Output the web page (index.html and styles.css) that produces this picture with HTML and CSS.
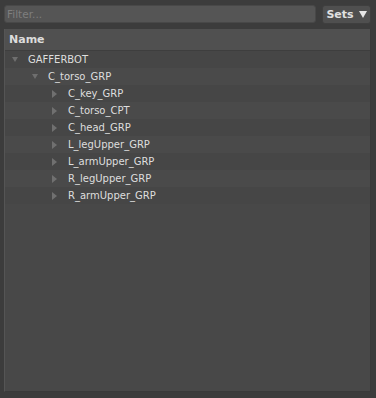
FILE: index.html
```html
<!DOCTYPE html>
<html>
<head>
<meta charset="utf-8">
<link rel="stylesheet" href="styles.css">
</head>
<body>
<div class="app">
  <div class="toolbar">
    <div class="filter">Filter...</div>
    <div class="sets">Sets <span class="caret"></span></div>
  </div>
  <div class="panel">
    <div class="header">Name</div>
    <div class="rows">
      <div class="row odd"><span class="tri down"></span><span class="label">GAFFERBOT</span></div>
      <div class="row even l1"><span class="tri down"></span><span class="label">C_torso_GRP</span></div>
      <div class="row odd l2"><span class="tri right"></span><span class="label">C_key_GRP</span></div>
      <div class="row even l2"><span class="tri right"></span><span class="label">C_torso_CPT</span></div>
      <div class="row odd l2"><span class="tri right"></span><span class="label">C_head_GRP</span></div>
      <div class="row even l2"><span class="tri right"></span><span class="label">L_legUpper_GRP</span></div>
      <div class="row odd l2"><span class="tri right"></span><span class="label">L_armUpper_GRP</span></div>
      <div class="row even l2"><span class="tri right"></span><span class="label">R_legUpper_GRP</span></div>
      <div class="row odd l2"><span class="tri right"></span><span class="label">R_armUpper_GRP</span></div>
    </div>
  </div>
</div>
</body>
</html>
```

FILE: styles.css
```css
html, body {
  margin: 0;
  padding: 0;
  background: #3c3c3c;
  width: 376px;
  height: 398px;
  overflow: hidden;
  font-family: "DejaVu Sans", sans-serif;
  font-size: 10px;
  color: #dcdcdc;
}
.app {
  padding: 5px 5px 5px 4px;
  display: flex;
  flex-direction: column;
  gap: 6px;
  height: 398px;
  box-sizing: border-box;
}
.toolbar {
  display: flex;
  gap: 6px;
  height: 18px;
}
.filter {
  flex: 1;
  background: #555555;
  border: 1px solid #484848;
  border-radius: 3px;
  color: #7e7e7e;
  padding-left: 2px;
  line-height: 16px;
  box-sizing: border-box;
  height: 18px;
  font-size: 10.5px;
}
.sets {
  width: 49px;
  box-sizing: border-box;
  background: #4f4f4f;
  border: 1px solid #3f3f3f;
  border-radius: 3px;
  font-weight: bold;
  font-size: 11px;
  color: #e0e0e0;
  display: flex;
  align-items: center;
  justify-content: center;
  gap: 5px;
  height: 19px;
}
.caret {
  width: 0;
  height: 0;
  border-left: 4px solid transparent;
  border-right: 4px solid transparent;
  border-top: 7px solid #e6e6e6;
}
.panel {
  flex: 1;
  background: #484848;
  border-right: 1px solid #3a3a3a;
  border-bottom: 1px solid #3a3a3a;
  border-left: 1px solid #555555;
  display: flex;
  flex-direction: column;
  margin-bottom: 1px;
}
.header {
  height: 21px;
  background: #505050;
  border-bottom: 1px solid #3e3e3e;
  font-weight: bold;
  font-size: 11px;
  padding-left: 4px;
  line-height: 21px;
  color: #dcdcdc;
}
.rows {
  display: flex;
  flex-direction: column;
}
.row {
  height: 17px;
  display: flex;
  align-items: center;
  padding-left: 7px;
}
.row.odd { background: #464646; }
.row.even { background: #4a4a4a; }
.row.l1 { padding-left: 27px; }
.row.l2 { padding-left: 47px; }
.tri {
  width: 0;
  height: 0;
}
.tri.down {
  border-left: 3px solid transparent;
  border-right: 3px solid transparent;
  border-top: 5px solid #6e6e6e;
  margin-right: 10px;
}
.tri.right {
  border-top: 4px solid transparent;
  border-bottom: 4px solid transparent;
  border-left: 5px solid #707070;
  margin-right: 11px;
}
.label {
  color: #dedede;
}
```
